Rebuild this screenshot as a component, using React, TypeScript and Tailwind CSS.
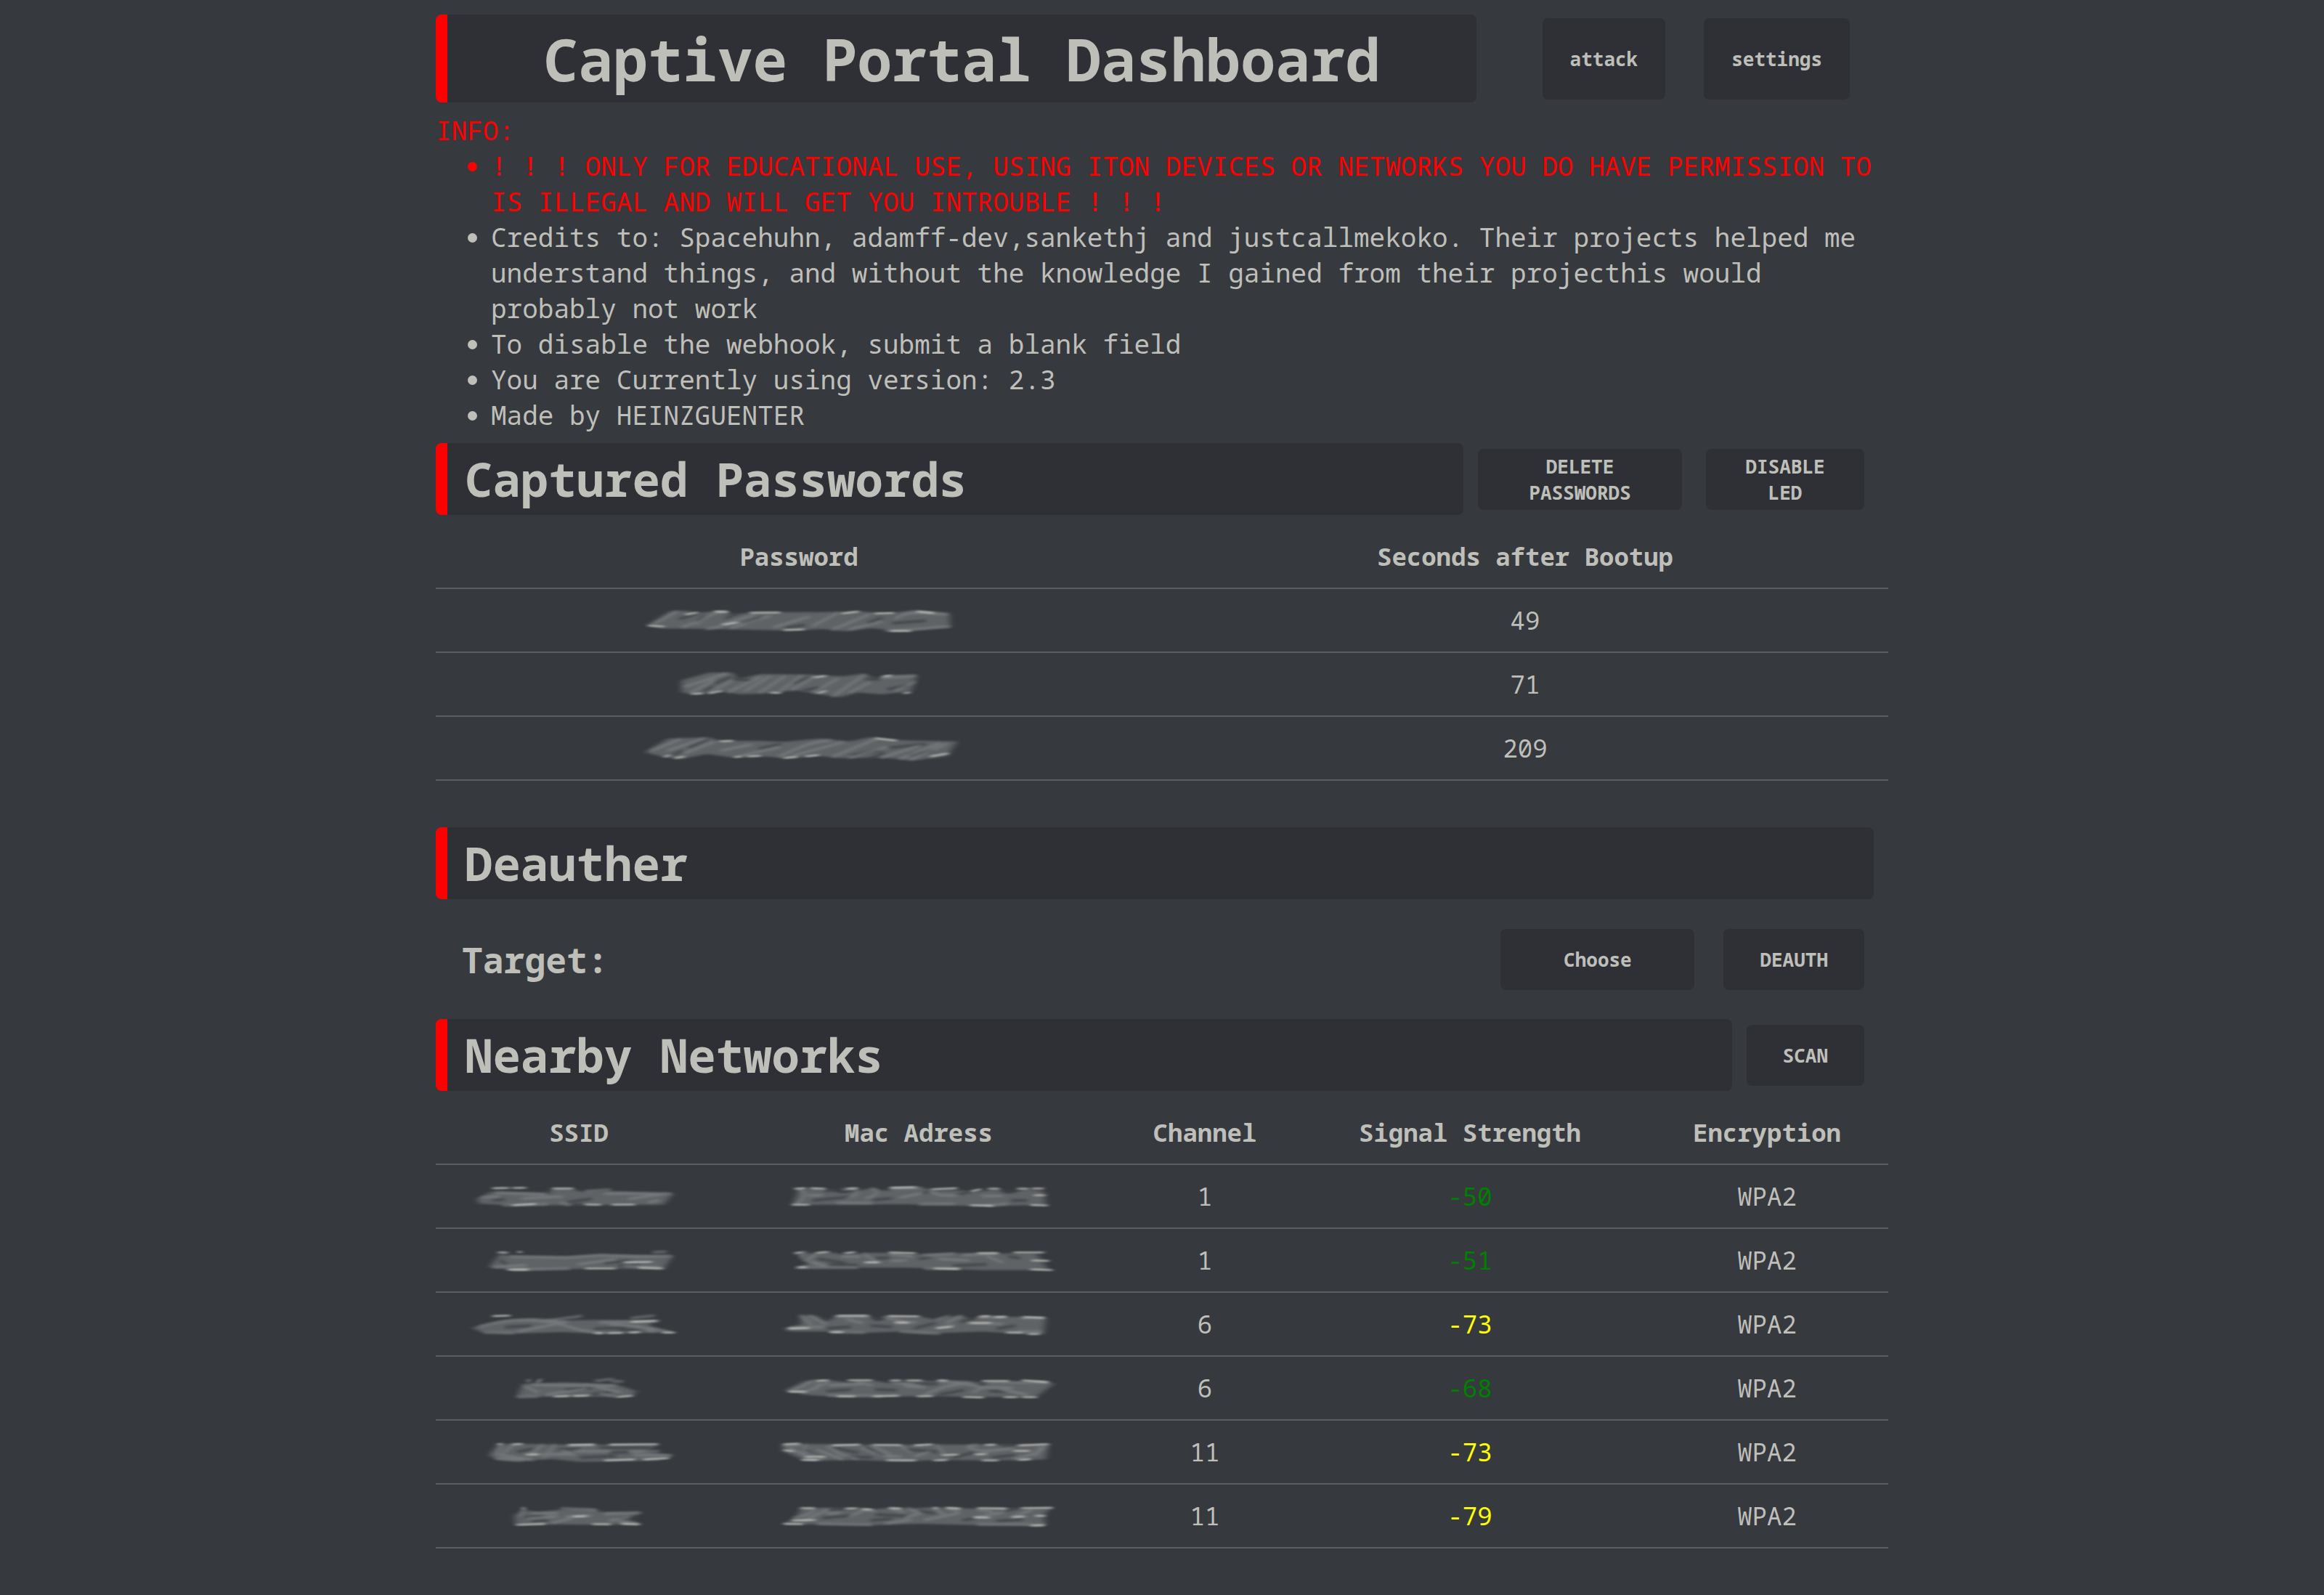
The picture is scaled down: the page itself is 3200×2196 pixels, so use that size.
import type { ReactNode } from "react";

type Smudge = {
  top: number;
  label: string;
  body: string;
  shade?: string;
  streaks: string;
  glints: string;
};

const passwords: { smudge: Smudge; seconds: number }[] = [
  {
    seconds: 49,
    smudge: {
      top: 33,
      label: "hidden password",
      body: "M95 122 L190 64 L250 62 L300 72 L400 62 L440 78 L560 68 L800 68 L980 66 L1080 74 L1200 60 L1340 72 L1345 132 L1140 148 L1020 134 L910 148 L820 138 L680 145 L380 138 L150 136 Z",
      shade: "M230 96 L300 74 M330 84 L300 108 M420 92 L470 74 M670 132 L740 122 M1010 112 L1060 92 M1110 114 L1240 104 M560 92 L500 112",
      streaks: "M120 118 L215 66 M300 118 C330 90 370 66 420 66 M240 130 L300 108 M400 120 L540 78 M440 134 L600 84 M620 130 L760 88 M780 124 L880 72 M860 140 L1010 78 M930 140 L1060 108 M1080 144 C1160 146 1260 132 1340 128 M1120 96 C1160 60 1230 72 1330 78 M340 138 L400 128",
      glints: "M100 124 L160 128 M255 78 L300 70 M375 66 L425 68 M520 71 L640 70 M410 120 L465 111 M660 142 L740 140 M900 74 L965 66 M1035 74 L1110 72 M1210 66 L1275 72 M1100 146 L1180 146",
    },
  },
  {
    seconds: 71,
    smudge: {
      top: 297,
      label: "hidden password",
      body: "M235 400 L235 350 L350 318 L445 318 L470 346 L560 324 L760 326 L900 334 L990 322 L1040 346 L1080 330 L1205 326 L1185 395 L1060 408 L960 400 L890 420 L790 405 L700 390 L620 402 L480 408 L390 394 L290 408 Z",
      shade: "M375 362 L435 338 M335 392 L360 376 M455 344 L520 350 M700 362 L760 338 M740 392 L800 380 M1000 344 L1050 346 M1090 386 L1170 372",
      streaks: "M250 376 L420 322 M275 400 L370 350 M350 402 L440 352 M430 398 L560 336 M500 392 L600 334 M560 400 L660 334 M640 398 L730 332 M690 390 L780 336 M780 400 L880 344 M860 416 L990 328 M930 400 L1010 360 M1060 340 L1200 332 M1120 392 L1200 356",
      glints: "M280 406 L322 404 M350 403 L400 394 M605 401 L640 402 M785 338 L830 332 M1070 334 L1100 330 M1155 403 L1178 400 M800 403 L830 394",
    },
  },
  {
    seconds: 209,
    smudge: {
      top: 561,
      label: "hidden password",
      body: "M85 648 L180 590 L350 586 L390 600 L560 600 L660 604 L810 590 L930 602 L1020 584 L1150 598 L1375 602 L1330 664 L1190 682 L1060 668 L900 672 L800 662 L680 672 L560 664 L440 668 L340 654 L230 676 L150 664 Z",
      shade: "M205 656 L235 642 M270 626 L340 594 M560 632 L640 614 M940 660 L1050 640 M1100 628 L1240 614 M1010 676 L1070 650 M1180 660 L1270 640",
      streaks: "M110 640 L230 594 M180 640 L330 590 M250 650 L370 604 M400 640 L520 616 M480 662 L640 626 M640 664 C760 610 780 604 850 598 M700 660 L900 606 M860 666 L1040 592 M930 670 L1080 626 M1060 670 L1220 620 M1140 674 L1300 610 M1180 678 L1330 612",
      glints: "M165 666 L185 660 M210 671 L245 665 M395 602 L445 600 M455 667 L480 665 M510 664 L560 662 M660 671 L710 666 M750 664 L800 659 M1265 664 L1335 652 M1040 590 L1120 599",
    },
  },
];

const networks: {
  ssid: Smudge;
  mac: Smudge;
  channel: number;
  signal: number;
  encryption: string;
}[] = [
  {
    channel: 1,
    signal: -50,
    encryption: "WPA2",
    ssid: {
      top: 12,
      label: "hidden SSID",
      body: "M50 92 L110 62 L340 66 L370 48 L440 50 L480 62 L640 60 L860 70 L820 116 L500 116 L430 118 L180 118 L60 112 Z",
      shade: "M430 104 L520 92 M350 66 L330 58 M450 116 L480 114 M120 98 L160 94",
      streaks: "M70 86 L140 82 M130 66 L330 74 M240 90 L400 82 M500 60 L600 54 M580 70 L850 70 M680 92 L820 72 M160 118 L340 114 M400 108 L430 118 M760 106 L800 98",
      glints: "M118 48 L180 47 M200 47 L250 46 M365 49 L445 49 M500 115 L560 116 M610 116 L700 115 M200 118 L290 113",
    },
    mac: {
      top: 12,
      label: "hidden MAC address",
      body: "M95 116 L120 52 L230 50 L300 70 L420 48 L480 60 L520 44 L620 44 L680 56 L770 56 L850 62 L950 52 L980 72 L1060 52 L1130 60 L1140 116 L880 122 L560 114 L200 116 Z",
      shade: "M180 98 L330 84 M230 60 L290 50 M430 96 L500 90 M770 76 L830 62 M960 58 L1010 60 M1000 98 L1060 98 M640 66 L660 60",
      streaks: "M110 112 C150 90 150 60 120 52 M160 78 L215 76 M300 54 C380 44 380 70 320 90 M400 90 C460 72 450 50 420 50 M500 48 L620 46 M540 86 L620 70 M660 60 L700 76 L780 78 M880 80 L960 80 M280 108 L420 110 M620 114 L760 112 M900 120 L980 112",
      glints: "M105 50 L145 48 M170 48 L225 50 M95 116 L160 116 M320 50 L360 48 M670 52 L770 48 M835 60 L870 52 M905 50 L945 50 M1025 50 L1065 50 M1085 49 L1128 49 M1095 77 L1135 77 M1080 117 L1145 119 M500 46 L600 44 M830 118 L920 120",
    },
  },
  {
    channel: 1,
    signal: -51,
    encryption: "WPA2",
    ssid: {
      top: 276,
      label: "hidden SSID",
      body: "M145 320 L200 328 L420 330 L560 322 L860 326 L820 384 L580 378 L220 388 L100 374 Z",
      shade: "M580 356 L680 348 M150 348 L170 360 M640 368 L720 364",
      streaks: "M190 330 L420 334 L560 324 L720 330 L850 328 M120 374 L250 366 M200 384 L430 380 M470 362 L620 342 M660 368 L800 374 M780 312 L830 310",
      glints: "M140 313 L175 314 M222 311 L232 312 M660 354 L770 352 M500 379 L620 379 M720 376 L815 379 M180 384 L260 384",
    },
    mac: {
      top: 276,
      label: "hidden MAC address",
      body: "M110 320 L250 312 L300 322 L420 314 L500 316 L600 320 L760 316 L940 318 L1100 316 L1150 386 L880 386 L560 376 L110 376 L170 356 Z",
      shade: "M200 340 L310 356 M250 364 L360 366 M440 336 L490 336 M760 368 L890 362 M620 340 L660 332 M990 330 L1030 336",
      streaks: "M150 312 C110 330 130 350 220 366 M190 322 L150 346 L230 368 M300 330 L370 330 M390 318 L440 352 M500 320 L590 330 M640 326 L760 318 M700 340 L820 346 M800 324 L940 318 M900 330 L960 354 M110 376 L360 376 M640 380 L780 380 M560 346 L500 348",
      glints: "M105 316 L135 312 M195 315 L240 311 M310 316 L350 312 M495 313 L600 316 M395 354 L450 354 M1010 313 L1130 313 M1085 346 L1150 348 M1080 383 L1165 386 M120 375 L150 374 M860 316 L940 316 M680 379 L780 381",
    },
  },
  {
    channel: 6,
    signal: -73,
    encryption: "WPA2",
    ssid: {
      top: 540,
      label: "hidden SSID",
      body: "M30 624 L160 594 L290 584 L400 594 L560 592 L780 596 L760 616 L850 644 L680 646 L560 648 L400 642 L200 648 L70 642 Z",
      shade: "M170 622 L270 616 M540 628 L660 624 M640 634 L750 630",
      streaks: "M60 620 C160 590 260 586 320 598 L420 602 M220 640 L420 600 M380 606 L480 634 L560 646 M330 596 L480 576 M560 602 L800 596 M600 610 C700 614 780 626 850 642 M80 644 L200 646 M690 584 L780 574 M700 620 L780 640",
      glints: "M118 576 L185 574 M540 646 L570 646 M590 646 L650 645 M680 644 L720 642 M820 644 L865 644 M690 600 L790 596",
    },
    mac: {
      top: 540,
      label: "hidden MAC address",
      body: "M60 628 L130 610 L125 572 L190 574 L230 600 L280 576 L410 576 L440 598 L500 576 L620 578 L680 590 L790 572 L830 592 L880 576 L980 580 L1040 578 L1140 582 L1130 652 L1060 650 L880 640 L640 648 L540 640 L380 646 L260 640 L80 640 Z",
      shade: "M240 626 L330 620 M420 616 L500 620 M600 626 L680 606 M790 600 L840 586 M940 628 L1010 616 M440 588 L470 584",
      streaks: "M130 574 L170 610 M165 574 L230 608 M80 626 L220 620 M270 578 L410 576 M320 590 L380 604 M470 580 L570 602 M520 608 L600 600 M690 590 L740 576 M730 604 L790 576 M700 624 L760 614 M820 604 L960 608 M860 582 L970 580 M1040 584 L1130 584 M1030 640 L1120 640 M260 642 L390 644 M540 640 L700 648",
      glints: "M80 627 L160 625 M280 575 L400 575 M490 576 L615 577 M520 602 L570 603 M690 626 L750 620 M870 578 L905 576 M930 580 L975 579 M830 605 L910 604 M980 644 L1040 644 M1050 580 L1130 583 M1070 650 L1110 650 M250 642 L300 642",
    },
  },
  {
    channel: 6,
    signal: -68,
    encryption: "WPA2",
    ssid: {
      top: 804,
      label: "hidden SSID",
      body: "M215 910 L240 856 L420 850 L620 858 L710 886 L690 908 L540 908 L420 908 Z",
      shade: "M420 880 L520 872 M530 898 L600 892",
      streaks: "M250 866 L300 890 M280 860 L620 864 M340 900 L500 876 M500 858 L640 890 M220 910 L300 908 M540 844 L610 836 M610 846 L650 846 M560 896 L620 908",
      glints: "M262 846 L264 839 M302 850 L312 838 M370 908 L430 906 M450 906 L510 904 M630 910 L690 905",
    },
    mac: {
      top: 804,
      label: "hidden MAC address",
      body: "M60 884 L150 842 L260 842 L320 850 L430 842 L500 854 L620 842 L700 846 L800 842 L880 852 L1130 844 L1175 856 L1140 880 L1100 910 L850 910 L660 906 L540 908 L300 908 L170 904 Z",
      shade: "M240 886 L330 880 M440 880 L520 882 M600 856 L690 856 M700 900 L800 882 M910 886 L970 888 M860 858 L890 860",
      streaks: "M90 886 L180 842 M140 892 L240 850 M200 850 L190 880 M250 862 L380 856 M360 846 L420 862 M500 850 L620 862 M560 866 L640 870 M640 900 L720 868 L820 852 M700 846 C760 846 820 856 870 868 M840 890 L880 870 L1000 872 M900 850 L1150 850 M240 904 L460 906 M960 880 L1060 900",
      glints: "M80 888 L145 888 M195 843 L240 841 M325 841 L420 841 M500 842 L540 842 M565 842 L625 842 M695 842 L730 842 M880 844 L985 844 M1045 841 L1145 849 M280 907 L350 907 M430 907 L530 905 M610 907 L670 906 M800 910 L880 912 M970 911 L1020 911 M1045 911 L1100 911",
    },
  },
  {
    channel: 11,
    signal: -73,
    encryption: "WPA2",
    ssid: {
      top: 1068,
      label: "hidden SSID",
      body: "M100 1150 L140 1104 L240 1104 L390 1106 L450 1108 L800 1106 L740 1136 L860 1150 L800 1172 L480 1178 L360 1166 L200 1176 L130 1168 Z",
      shade: "M220 1136 L280 1124 M390 1128 L470 1122 M600 1140 L680 1138 M480 1160 L620 1154 M560 1120 L760 1120",
      streaks: "M150 1110 L130 1150 M200 1108 L150 1150 L280 1170 M280 1140 L320 1108 M330 1160 L370 1108 M250 1148 L450 1146 M430 1112 L540 1108 M460 1134 L600 1134 M680 1136 L800 1134 M700 1150 L850 1152 M130 1164 L240 1172 M400 1130 L450 1150",
      glints: "M138 1105 L150 1104 M200 1106 L235 1104 M430 1108 L530 1107 M600 1107 L795 1105 M580 1172 L700 1168 M740 1168 L840 1163 M260 1148 L300 1147",
    },
    mac: {
      top: 1068,
      label: "hidden MAC address",
      body: "M50 1106 L180 1104 L380 1108 L560 1108 L720 1106 L930 1108 L1060 1108 L1150 1106 L1140 1168 L920 1172 L700 1170 L540 1176 L330 1170 L150 1174 L60 1136 Z",
      shade: "M150 1132 L200 1160 M270 1120 L360 1140 M400 1118 L430 1134 M320 1158 L420 1160 M570 1128 L690 1136 M760 1160 L840 1140 M920 1160 L1010 1150 M960 1112 L1010 1108 M440 1144 L470 1158",
      streaks: "M60 1108 L130 1108 M80 1120 L180 1170 M150 1108 L140 1136 L220 1166 M200 1130 L300 1168 M240 1114 L290 1146 L360 1166 M380 1120 L460 1156 L540 1156 M420 1110 L500 1150 M540 1112 L580 1138 M600 1156 L660 1136 M690 1108 L720 1146 M820 1120 L900 1140 M820 1112 L860 1108 M880 1134 L1000 1124 M1010 1166 C1080 1150 1120 1140 1140 1112 M1120 1110 L1100 1150",
      glints: "M60 1130 L95 1134 M150 1157 L225 1157 M135 1170 L200 1170 M60 1106 L120 1103 M260 1110 L370 1107 M430 1108 L540 1109 M600 1110 L670 1106 M715 1150 L775 1148 M485 1171 L600 1172 M680 1172 L730 1170 M850 1147 L890 1146 M890 1108 L930 1107 M880 1172 L940 1172 M1030 1110 L1150 1105 M1010 1133 L1070 1133 M1030 1170 L1075 1167",
    },
  },
  {
    channel: 11,
    signal: -79,
    encryption: "WPA2",
    ssid: {
      top: 1332,
      label: "hidden SSID",
      body: "M205 1400 L240 1376 L300 1386 L410 1374 L540 1374 L560 1386 L735 1386 L670 1412 L720 1436 L500 1438 L380 1436 L210 1438 Z",
      shade: "M250 1406 L320 1402 M640 1412 L710 1410 M280 1424 L340 1420",
      streaks: "M230 1400 L245 1372 M280 1390 L380 1390 M260 1412 L380 1404 M400 1370 L540 1376 M420 1404 L520 1400 M580 1392 L720 1388 M600 1420 L680 1406 M640 1424 L710 1434 M360 1430 L440 1412",
      glints: "M240 1367 L244 1373 M215 1438 L330 1434 M530 1435 L600 1436 M650 1434 L720 1436 M450 1404 L500 1402",
    },
    mac: {
      top: 1332,
      label: "hidden MAC address",
      body: "M60 1434 L110 1406 L130 1368 L240 1368 L320 1372 L430 1374 L500 1368 L590 1370 L680 1366 L790 1370 L860 1372 L980 1370 L1040 1372 L1160 1368 L1130 1400 L1140 1440 L880 1440 L620 1434 L400 1440 L180 1436 Z",
      shade: "M220 1410 L330 1400 M250 1376 L310 1372 M440 1396 L560 1402 M620 1382 L680 1390 M800 1420 L840 1412 M940 1422 L1040 1416 M980 1380 L1020 1370 M420 1420 L500 1414",
      streaks: "M100 1410 C150 1400 190 1386 180 1370 M140 1422 L240 1374 M240 1392 L290 1388 M330 1404 L390 1376 M380 1372 L430 1382 M500 1372 L550 1384 M570 1370 L620 1390 L560 1410 M680 1370 L720 1396 M740 1372 L780 1380 M640 1418 L780 1390 M860 1376 L920 1384 M860 1406 L960 1388 M1000 1408 L1080 1376 M200 1434 L420 1438 M580 1418 L480 1432 M860 1436 L1130 1438",
      glints: "M130 1369 L180 1370 M95 1420 L185 1418 M60 1434 L135 1435 M315 1371 L360 1370 M385 1374 L420 1375 M495 1369 L540 1371 M680 1368 L690 1370 M730 1368 L785 1371 M860 1369 L975 1371 M1040 1369 L1165 1368 M1100 1401 L1135 1401 M845 1407 L905 1408 M1005 1406 L1050 1404 M1080 1441 L1130 1440",
    },
  },
];

function SmudgeFilters() {
  return (
    <svg className="absolute size-0" aria-hidden="true">
      <defs>
        <filter id="soft" colorInterpolationFilters="sRGB" filterUnits="userSpaceOnUse" x="-60" y="-60" width="1600" height="1600">
          <feGaussianBlur stdDeviation="15 5" />
        </filter>
        <filter id="fine" colorInterpolationFilters="sRGB" filterUnits="userSpaceOnUse" x="-60" y="-60" width="1600" height="1600">
          <feGaussianBlur stdDeviation="9 4" />
        </filter>
        <filter id="crisp" colorInterpolationFilters="sRGB" filterUnits="userSpaceOnUse" x="-60" y="-60" width="1600" height="1600">
          <feGaussianBlur stdDeviation="10 3" />
        </filter>
      </defs>
    </svg>
  );
}

function Redacted({ smudge, width, className }: { smudge: Smudge; width: number; className: string }) {
  return (
    <svg
      role="img"
      aria-label={smudge.label}
      viewBox={`0 ${smudge.top} ${width} 138`}
      className={`mx-auto block h-[46px] overflow-visible ${className}`}
      fill="none"
      strokeLinecap="round"
    >
      <path d={smudge.body} fill="#606366" filter="url(#soft)" />
      <path d={smudge.shade} stroke="#3c3f44" strokeWidth="12" opacity="0.75" filter="url(#fine)" />
      <path d={smudge.streaks} stroke="#85888a" strokeWidth="10" opacity="0.6" filter="url(#fine)" />
      <path d={smudge.glints} stroke="#c8c8c4" strokeWidth="7" opacity="0.85" filter="url(#crisp)" />
    </svg>
  );
}

function Button({ className, children }: { className: string; children: ReactNode }) {
  return (
    <button
      type="button"
      className={`shrink-0 cursor-pointer rounded-lg bg-[#2f3035] text-[26px] leading-9 font-bold ${className}`}
    >
      {children}
    </button>
  );
}

function Heading({ children }: { children: ReactNode }) {
  return (
    <h2 className="min-w-0 flex-1 rounded-lg border-l-16 border-[#ff0000] bg-[#2f3035] px-6 py-1.5 text-[64px] leading-[87px] font-bold">
      {children}
    </h2>
  );
}

function Th({ className = "", children }: { className?: string; children: ReactNode }) {
  return (
    <th scope="col" className={`border-b-2 border-[#5f5d5d] py-5 font-bold ${className}`}>
      {children}
    </th>
  );
}

function Td({ className = "", children }: { className?: string; children: ReactNode }) {
  return <td className={`border-b-2 border-[#5f5d5d] py-5 ${className}`}>{children}</td>;
}

export default function App() {
  return (
    <div className="min-h-screen bg-[#36393e] font-['Noto_Sans_Mono','DejaVu_Sans_Mono',monospace] text-[#bfbfba]">
      <SmudgeFilters />
      <main className="mx-auto w-full max-w-[2000px] pt-5 pb-16">
        <header className="flex items-center pr-[53px]">
          <h1 className="min-w-0 flex-1 rounded-lg border-l-16 border-[#ff0000] bg-[#2f3035] py-1.5 text-center text-[80px] leading-[109px] font-bold">
            Captive Portal Dashboard
          </h1>
          <nav className="ml-[91px] flex gap-[53px]">
            <Button className="p-[38px]">attack</Button>
            <Button className="p-[38px]">settings</Button>
          </nav>
        </header>

        <section className="my-3.5 text-[36px] leading-[49px]">
          <p className="text-[#ff0000]">INFO:</p>
          <ul className="list-disc pl-[76px]">
            <li className="text-[#ff0000]">
              ! ! ! ONLY FOR EDUCATIONAL USE, USING ITON DEVICES OR NETWORKS YOU DO HAVE PERMISSION TO IS ILLEGAL AND
              WILL GET YOU INTROUBLE ! ! !
            </li>
            <li>
              Credits to: Spacehuhn, adamff-dev,sankethj and justcallmekoko. Their projects helped me understand
              things, and without the knowledge I gained from their projecthis would probably not work
            </li>
            <li>To disable the webhook, submit a blank field</li>
            <li>You are Currently using version: 2.3</li>
            <li>Made by HEINZGUENTER</li>
          </ul>
        </section>

        <section>
          <div className="flex items-center pr-[33px]">
            <Heading>Captured Passwords</Heading>
            <Button className="ml-5 w-[281px] px-[50px] py-1.5">DELETE PASSWORDS</Button>
            <Button className="ml-[33px] w-[218px] px-[50px] py-1.5">DISABLE LED</Button>
          </div>
          <table className="mt-3.5 w-full table-fixed border-separate border-spacing-0 text-center text-[34px] leading-[46px]">
            <thead>
              <tr>
                <Th>Password</Th>
                <Th>Seconds after Bootup</Th>
              </tr>
            </thead>
            <tbody>
              {passwords.map((row) => (
                <tr key={row.seconds}>
                  <Td>
                    <Redacted smudge={row.smudge} width={1440} className="w-[480px]" />
                  </Td>
                  <Td>{row.seconds}</Td>
                </tr>
              ))}
            </tbody>
          </table>
        </section>

        <section className="mt-16">
          <div className="flex pr-5">
            <Heading>Deauther</Heading>
          </div>
          <div className="flex items-center pt-[41px] pr-[33px] pb-10 pl-9">
            <h3 className="flex-1 text-[48px] leading-[65px] font-bold">Target:</h3>
            <Button className="w-[267px] px-[50px] py-6">Choose</Button>
            <Button className="ml-10 px-[50px] py-6">DEAUTH</Button>
          </div>
        </section>

        <section>
          <div className="flex items-center pr-[33px]">
            <Heading>Nearby Networks</Heading>
            <Button className="ml-5 px-[50px] py-6">SCAN</Button>
          </div>
          <table className="mt-3.5 w-full table-fixed border-separate border-spacing-0 text-center text-[34px] leading-[46px]">
            <thead>
              <tr>
                <Th className="w-[19.7%]">SSID</Th>
                <Th className="w-[27.1%]">Mac Adress</Th>
                <Th className="w-[12.3%]">Channel</Th>
                <Th className="w-[24.2%]">Signal Strength</Th>
                <Th className="w-[16.7%]">Encryption</Th>
              </tr>
            </thead>
            <tbody>
              {networks.map((row) => (
                <tr key={row.ssid.top}>
                  <Td>
                    <Redacted smudge={row.ssid} width={942} className="w-[314px]" />
                  </Td>
                  <Td>
                    <Redacted smudge={row.mac} width={1230} className="w-[410px]" />
                  </Td>
                  <Td>{row.channel}</Td>
                  <Td className={row.signal > -70 ? "text-[#008000]" : "text-[#ffff00]"}>{row.signal}</Td>
                  <Td>{row.encryption}</Td>
                </tr>
              ))}
            </tbody>
          </table>
        </section>
      </main>
    </div>
  );
}
